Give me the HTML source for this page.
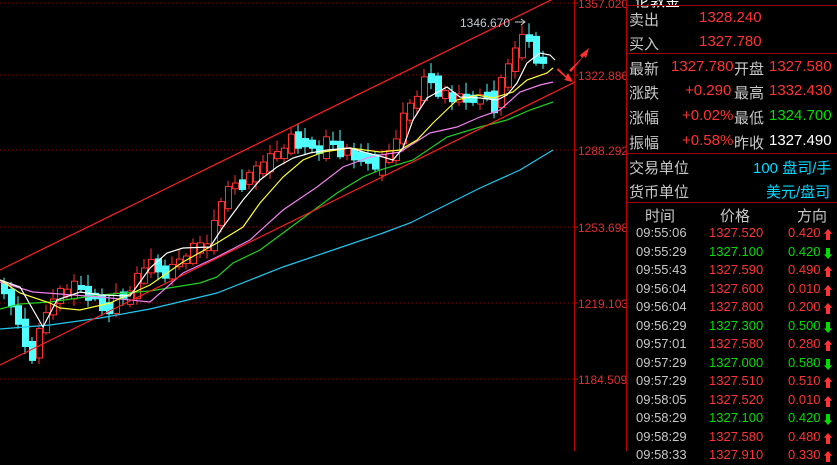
<!DOCTYPE html>
<html><head><meta charset="utf-8"><style>
body{margin:0;background:#000;width:837px;height:451px;overflow:hidden;position:relative;font-family:"Liberation Sans","Noto Sans CJK SC",sans-serif}
svg{position:absolute;left:0;top:0}
.p{position:absolute;left:626px;top:0;width:211px;height:451px;border-left:1px solid #c00000}
.r{position:absolute;font-size:15px;white-space:nowrap}
.lab{color:#c8c8c8}
.red{color:#ff3333}.grn{color:#00e000}.wht{color:#fff}.cy{color:#00d8ff}
.hl{position:absolute;left:0;width:211px;height:1px;background:#a00000}
.tr{position:absolute;left:0;width:211px;font-size:13px;height:18px}
.tr span{position:absolute}
</style></head><body>
<svg id="c" width="626" height="451"></svg>
<div class="p">
<div class="r wht" style="left:8px;top:-10px;font-size:15px">伦敦金</div>
<div class="hl" style="top:5px"></div>
<div class="r lab" style="left:2px;top:9px">卖出</div><div class="r red" style="left:72px;top:9px">1328.240</div>
<div class="r lab" style="left:2px;top:33px">买入</div><div class="r red" style="left:72px;top:33px">1327.780</div>
<div class="hl" style="top:53px"></div>
<div class="r lab" style="left:2px;top:58px">最新</div><div class="r red" style="left:44px;top:58px">1327.780</div><div class="r lab" style="left:107px;top:58px">开盘</div><div class="r red" style="left:142px;top:58px">1327.580</div>
<div class="r lab" style="left:2px;top:82px">涨跌</div><div class="r red" style="left:58px;top:82px">+0.290</div><div class="r lab" style="left:107px;top:82px">最高</div><div class="r red" style="left:142px;top:82px">1332.430</div>
<div class="r lab" style="left:2px;top:107px">涨幅</div><div class="r red" style="left:55px;top:107px">+0.02%</div><div class="r lab" style="left:107px;top:107px">最低</div><div class="r grn" style="left:142px;top:107px">1324.700</div>
<div class="r lab" style="left:2px;top:132px">振幅</div><div class="r red" style="left:55px;top:132px">+0.58%</div><div class="r lab" style="left:107px;top:132px">昨收</div><div class="r wht" style="left:142px;top:132px">1327.490</div>
<div class="hl" style="top:153px"></div>
<div class="r lab" style="left:2px;top:157px">交易单位</div><div class="r cy" style="left:126px;top:157px">100 盘司/手</div>
<div class="r lab" style="left:2px;top:181px">货币单位</div><div class="r cy" style="left:139px;top:181px">美元/盘司</div>
<div class="hl" style="top:202px"></div>
<div class="r lab" style="left:18px;top:205px">时间</div><div class="r lab" style="left:93px;top:205px">价格</div><div class="r lab" style="left:170px;top:205px">方向</div>
<div id="rows"></div>
</div>
<script>
const S='http://www.w3.org/2000/svg',svg=document.getElementById('c');
function el(t,a){const e=document.createElementNS(S,t);for(const k in a)e.setAttribute(k,a[k]);svg.appendChild(e);return e}
function pl(pts,c,w){el('polyline',{points:pts.map(p=>p.join(',')).join(' '),fill:'none',stroke:c,'stroke-width':w||1})}
[3,75,150,227,303,379].forEach(y=>el('line',{x1:0,y1:y,x2:574,y2:y,stroke:'#900000','stroke-dasharray':'1,3'}));
el('line',{x1:574.5,y1:0,x2:574.5,y2:451,stroke:'#c00000'});
[['1357.020',3],['1322.886',75],['1288.292',150],['1253.698',227],['1219.103',303],['1184.509',379]].forEach(([t,y])=>{el('line',{x1:574,y1:y,x2:578,y2:y,stroke:'#c00000'});const e=el('text',{x:578,y:y+5,fill:'#e03030','font-size':12,'font-family':'Liberation Sans'});e.textContent=t});
const path=[[0,285],[10,300],[20,330],[30,360],[37,338],[45,318],[50,302],[60,292],[70,290],[80,288],[90,296],[100,305],[107,312],[115,300],[125,295],[135,285],[140,270],[150,266],[160,270],[167,276],[180,262],[190,250],[200,246],[210,240],[218,210],[225,196],[232,188],[240,185],[247,180],[255,170],[260,165],[267,160],[275,155],[283,150],[290,137],[297,142],[304,150],[311,145],[320,150],[330,140],[340,150],[350,156],[360,155],[366,160],[375,166],[385,160],[392,152],[400,125],[408,110],[415,100],[420,88],[427,78],[434,82],[441,94],[448,96],[455,97],[462,102],[470,97],[478,101],[486,96],[494,106],[501,82],[508,66],[515,48],[522,38],[528,34],[535,64],[541,62],[547,64]];
function ip(x){for(let i=1;i<path.length;i++)if(x<=path[i][0]){const a=path[i-1],b=path[i];return a[1]+(b[1]-a[1])*(x-a[0])/(b[0]-a[0])}return path[path.length-1][1]}
let prev=282,k=0;
for(let x=4;x<=547;x+=7){k++;const c=ip(x)+((k*37)%11-5)*0.8;const o=prev+((k*53)%9-4)*0.9;const up=c<o;let top=Math.min(o,c)-2-(k%3),bot=Math.max(o,c)+2+(k%2)*2;const hi=top-3-(k*29)%9,lo=bot+2+(k*17)%7;const col=up?'#ff3030':'#50ffff';el('line',{x1:x,y1:hi,x2:x,y2:lo,stroke:col});const h=Math.max(1,bot-top);if(up)el('rect',{x:x-2.5,y:top,width:6,height:h,fill:'#000',stroke:col});else el('rect',{x:x-3,y:top,width:7,height:h,fill:col});prev=c}
pl([[0,329],[50,325],[100,318],[150,309],[217,293],[283,267],[333,250],[383,233],[410,223],[480,188],[520,170],[553,150]],'#20c8f0',1.2);
pl([[0,309],[20,304],[50,302],[100,295],[150,291],[200,283],[217,277],[233,263],[260,250],[283,233],[310,213],[337,193],[363,177],[380,170],[413,160],[447,137],[480,127],[507,120],[530,110],[553,102]],'#20d020',1.2);
pl([[0,282],[33,292],[100,297],[150,302],[183,273],[217,257],[250,240],[283,210],[317,187],[343,167],[367,158],[380,155],[400,152],[430,133],[457,127],[480,117],[500,110],[520,92],[540,85],[553,82]],'#f080f0',1.2);
pl([[0,280],[20,293],[50,303],[60,308],[80,310],[110,303],[130,294],[150,285],[183,262],[217,243],[243,227],[260,203],[283,177],[303,160],[323,152],[350,148],[380,152],[400,150],[417,140],[433,123],[457,100],[477,95],[493,98],[513,92],[527,80],[547,73],[553,68]],'#ffff30',1.2);
pl([[0,280],[20,287],[43,327],[57,300],[80,292],[100,295],[130,296],[150,268],[167,253],[183,248],[210,247],[223,227],[243,200],[260,180],[277,167],[293,158],[310,153],[327,150],[350,148],[367,153],[383,157],[393,160],[403,148],[413,120],[427,98],[447,87],[460,97],[480,98],[497,100],[507,95],[517,83],[527,63],[540,53],[550,55],[555,60]],'#ffffff',1.2);
el('line',{x1:0,y1:365,x2:575,y2:82,stroke:'#ff2020','stroke-width':1.2});
el('line',{x1:0,y1:270,x2:551,y2:0,stroke:'#ff2020','stroke-width':1.2});
let t=el('text',{x:460,y:27,fill:'#c0c8d0','font-size':12,'font-family':'Liberation Sans'});t.textContent='1346.670';
el('line',{x1:515,y1:22,x2:524,y2:22,stroke:'#ccc'});el('path',{d:'M521,19 L525,22 L521,25',fill:'none',stroke:'#ccc'});
el('path',{d:'M569,70 L582,58 L580,55 L589,48 L586,58 L584,56 L571,72Z',fill:'#ff3030'});
el('path',{d:'M558,68 L566,76 L568,73 L573,82 L564,80 L566,78 L557,70Z',fill:'#ff3030'});
const rows=[['09:55:06','1327.520','0.420',1],['09:55:29','1327.100','0.420',0],['09:55:43','1327.590','0.490',1],['09:56:04','1327.600','0.010',1],['09:56:04','1327.800','0.200',1],['09:56:29','1327.300','0.500',0],['09:57:01','1327.580','0.280',1],['09:57:29','1327.000','0.580',0],['09:57:29','1327.510','0.510',1],['09:58:05','1327.520','0.010',1],['09:58:29','1327.100','0.420',0],['09:58:29','1327.580','0.480',1],['09:58:33','1327.910','0.330',1]];
let h='';rows.forEach((r,i)=>{const y=225+i*18.5;const c=r[3]?'#ff3333':'#00dd00';h+=`<div class="tr" style="top:${y}px"><span style="left:9px;color:#c8c8c8">${r[0]}</span><span style="left:82px;color:${c}">${r[1]}</span><span style="left:161px;color:${c}">${r[2]}</span><span style="left:195px;top:1px;color:${c};font-size:12px">${r[3]?'⬆':'⬇'}</span></div>`});
document.getElementById('rows').innerHTML=h;
</script>
</body></html>
